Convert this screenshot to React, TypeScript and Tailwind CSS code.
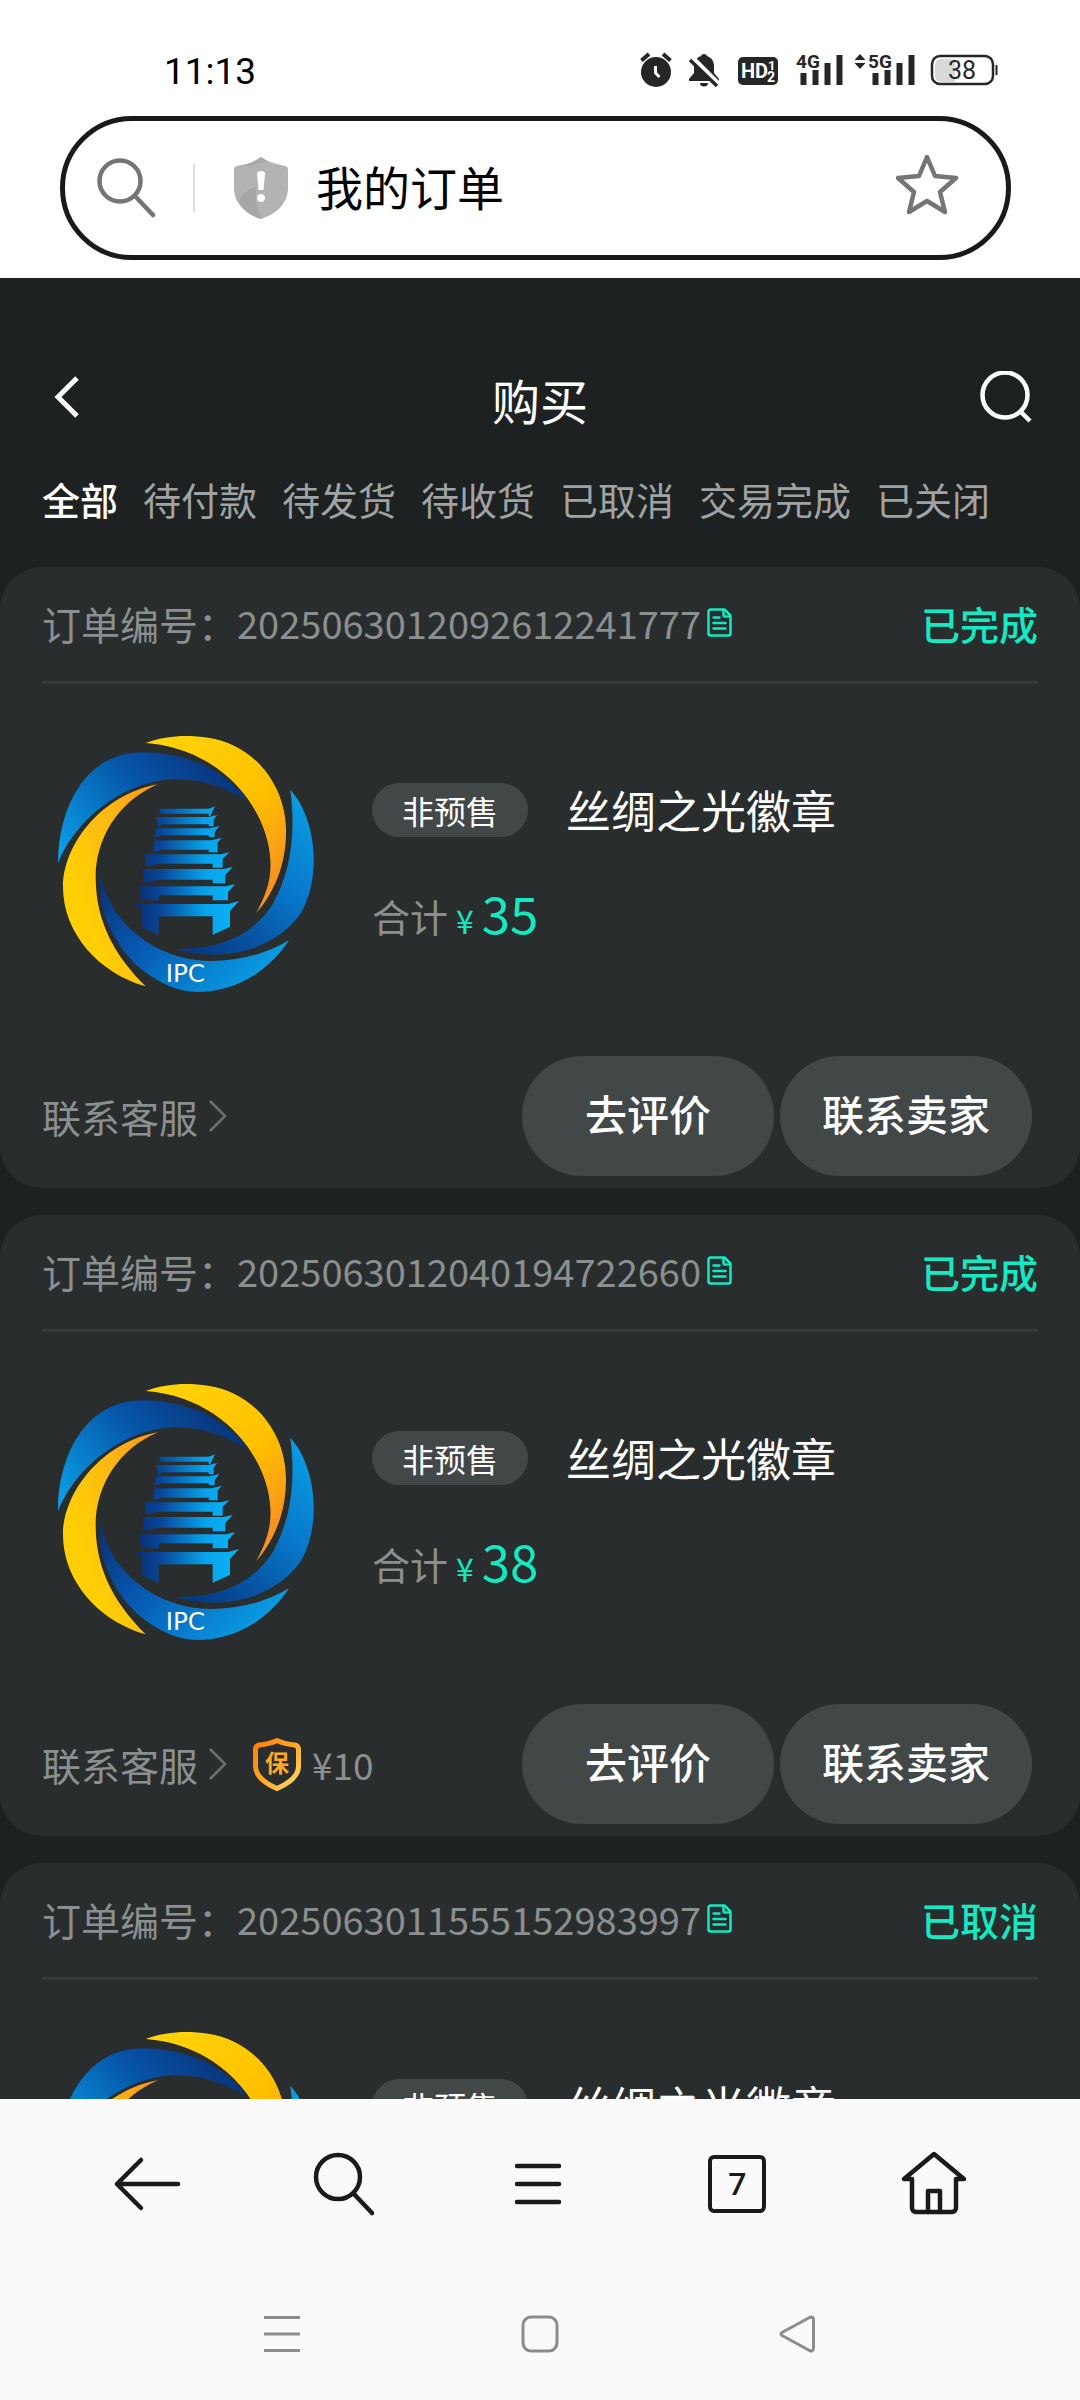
import { useState } from "react";

interface Order {
  id: string;
  status: string;
  title: string;
  price: number;
  deposit?: number;
}

const tabs = ["全部", "待付款", "待发货", "待收货", "已取消", "交易完成", "已关闭"];

const orders: Order[] = [
  { id: "2025063012092612241777", status: "已完成", title: "丝绸之光徽章", price: 35 },
  { id: "2025063012040194722660", status: "已完成", title: "丝绸之光徽章", price: 38, deposit: 10 },
  { id: "2025063011555152983997", status: "已取消", title: "丝绸之光徽章", price: 38 },
];

const StatusBar = () => (
  <div className="flex items-center justify-between pt-12 pl-[164px] pr-[82px] text-[#262626]">
    <span className="pt-1 font-['Roboto',sans-serif] text-[37px] leading-10 text-black">11:13</span>
    <svg width="358" height="36" viewBox="0 0 358 36" aria-hidden="true">
      {/* Alarm */}
      <circle cx="16" cy="20" r="15" fill="currentColor" />
      <path d="M1.500 8.500 9 2M30.500 8.500 23 2" stroke="currentColor" strokeWidth="4" fill="none" />
      <path d="M15.500 14v7l4 4" stroke="#fff" strokeWidth="3" fill="none" />
      {/* Muted bell */}
      <path d="M64 2a3 3 0 0 1 3 2c5 1.500 7 6 7 10v7l5 6v2H49v-2l5-6v-7c0-4 2-8.500 7-10a3 3 0 0 1 3-2z" fill="currentColor" />
      <path d="M60 31h8a4 3.500 0 0 1-8 0z" fill="currentColor" />
      <path d="M50 4 80 34" stroke="#fff" strokeWidth="6" />
      <path d="M50 8 77 34" stroke="currentColor" strokeWidth="3.500" />
      {/* HD */}
      <rect x="98" y="5" width="40" height="28" rx="5" fill="currentColor" />
      <text x="101" y="26" fill="#fff" fontSize="20" fontWeight="700" fontFamily="Roboto, sans-serif">HD</text>
      <text x="128" y="18" fill="#fff" fontSize="13" fontWeight="700" fontFamily="Roboto, sans-serif">1</text>
      <text x="127" y="30" fill="#fff" fontSize="14" fontWeight="700" fontFamily="Roboto, sans-serif">2</text>
      {/* 4G */}
      <text x="156" y="16" fill="currentColor" fontSize="19" fontWeight="700" fontFamily="Roboto, sans-serif">4G</text>
      <path d="M163.500 21v12M175.500 18v15M187.500 11v22M199.500 3v30" stroke="currentColor" strokeWidth="6" />
      {/* 5G */}
      <path d="m220 2 5.500 6h-11zM220 17l5.500-6h-11z" fill="currentColor" />
      <text x="228" y="16" fill="currentColor" fontSize="19" fontWeight="700" fontFamily="Roboto, sans-serif">5G</text>
      <path d="M235.500 21v12M247.500 18v15M259.500 11v22M271.500 3v30" stroke="currentColor" strokeWidth="6" />
      {/* Battery */}
      <path d="M301 7h14v23h-14a6 6 0 0 1-6-6V13a6 6 0 0 1 6-6z" fill="#d9d9d9" />
      <rect x="292" y="4" width="61" height="28" rx="8" fill="none" stroke="currentColor" strokeWidth="2.500" />
      <path d="M356.500 13v10" stroke="currentColor" strokeWidth="2" />
      <text x="322" y="27" textAnchor="middle" fill="currentColor" fontSize="25" fontFamily="Roboto, sans-serif">38</text>
    </svg>
  </div>
);

const AddressBar = () => (
  <div className="ml-[60px] mr-[69px] mt-6 flex h-36 items-center rounded-full border-[5px] border-[#1a1a1a] bg-white pl-8 pr-[46px]">
    <button type="button" aria-label="搜索">
      <svg width="60" height="60" viewBox="0 0 60 60" fill="none" stroke="#757575" strokeWidth="4.500" strokeLinecap="round" aria-hidden="true">
        <circle cx="23" cy="23" r="20.500" />
        <path d="m38 38 18 19" />
      </svg>
    </button>
    <span className="ml-9 h-12 w-0.5 bg-[#e0e0e0]" />
    <svg className="ml-[39px]" width="54" height="62" viewBox="0 0 54 62" aria-hidden="true">
      <path d="M27 0c7 5 15 8 24 9q3 .500 3 4v18c0 15-11 26-27 31C11 57 0 46 0 31V13q0-3.500 3-4c9-1 17-4 24-9z" fill="#b3b3b3" />
      <path d="M27 0c7 5 15 8 24 9L36 5q-8-1-19 4H3c9-1 17-4 24-9z" fill="#a9a9a9" />
      <path d="M5 44Q9 33 22 30v14l5 18C17 59 9 53 5 44z" fill="#a6a6a6" />
      <path d="M23 17q0-3 4-3t4 3l-1.500 16h-5z" fill="#fff" />
      <circle cx="27" cy="41" r="4" fill="#fff" />
    </svg>
    <input
      id="address"
      type="text"
      aria-label="地址栏"
      defaultValue="我的订单"
      className="ml-7 min-w-0 flex-1 bg-transparent pb-1 text-[47px] leading-[72px] text-black outline-none"
    />
    <button type="button" aria-label="收藏">
      <svg width="64" height="66" viewBox="0 0 64 66" fill="none" stroke="#757575" strokeWidth="4.500" strokeLinejoin="round" aria-hidden="true">
        <path d="m31 2 8 19 21 2-16 14 5 20-18-11-18 11 5-20L2 23l21-2z" />
      </svg>
    </button>
  </div>
);

const Emblem = () => (
  <svg width="256" height="256" viewBox="55 47 768 768" role="img" aria-label="IPC">
    <defs>
      <linearGradient id="gold" x1="0" y1="0" x2="0.6" y2="1">
        <stop offset="0" stopColor="#ffd60a" />
        <stop offset="0.6" stopColor="#ffc000" />
        <stop offset="1" stopColor="#f7931e" />
      </linearGradient>
      <linearGradient id="goldLeft" x1="1" y1="0" x2="0.2" y2="0.6">
        <stop offset="0" stopColor="#f7931e" />
        <stop offset="0.5" stopColor="#fdb813" />
        <stop offset="1" stopColor="#ffcf05" />
      </linearGradient>
      <linearGradient id="blueTop" x1="0" y1="0.8" x2="1" y2="0.3">
        <stop offset="0" stopColor="#0a9be3" />
        <stop offset="0.55" stopColor="#0654a8" />
        <stop offset="1" stopColor="#0a3278" />
      </linearGradient>
      <linearGradient id="blueRight" x1="0.8" y1="0" x2="0.2" y2="1">
        <stop offset="0" stopColor="#0a9be3" />
        <stop offset="0.45" stopColor="#0877c9" />
        <stop offset="1" stopColor="#063a85" />
      </linearGradient>
      <linearGradient id="blueBottom" x1="0" y1="0" x2="1" y2="0.6">
        <stop offset="0" stopColor="#0a2f70" />
        <stop offset="0.4" stopColor="#0656ae" />
        <stop offset="1" stopColor="#0a9be3" />
      </linearGradient>
      <linearGradient id="tower" gradientUnits="userSpaceOnUse" x1="300" y1="0" x2="560" y2="0">
        <stop offset="0" stopColor="#0a3278" />
        <stop offset="0.25" stopColor="#08479a" />
        <stop offset="0.75" stopColor="#07a3ea" />
        <stop offset="1" stopColor="#0aaef2" />
      </linearGradient>
    </defs>
    <path d="M55 428C55 260 140 95 310 96C440 97 560 150 622 240C540 195 480 176 405 177C260 180 110 290 55 428z" fill="url(#blueTop)" />
    <path d="M318 68C380 46 440 43 505 52C640 72 738 190 739 330C740 430 705 515 650 578C680 520 695 480 692 420C686 270 550 85 318 68z" fill="url(#gold)" />
    <path d="M752 208C800 260 825 350 822 430C820 490 805 550 775 590C700 685 560 730 400 686C540 690 640 645 700 550C750 460 770 350 752 208z" fill="url(#blueRight)" />
    <path d="M355 192C190 220 70 370 70 500C70 640 180 760 318 798C230 710 168 610 168 470C168 350 240 240 355 192z" fill="url(#goldLeft)" />
    <path d="M182 462C210 610 350 720 510 722C600 722 680 700 748 660C690 750 590 815 470 815C380 812 290 750 240 675C195 605 175 540 182 462z" fill="url(#blueBottom)" />
    <g fill="url(#tower)">
      <path d="M357 265H507L526 258L512 287H507V280H364z" />
      <path d="M350 290H506L532 284L522 298V318H507V312H368L356 320z" />
      <path d="M350 324H510L539 317L525 335V350H507V345H366L344 352z" />
      <path d="M345 360H516L547 352L534 366V396H507V388H372L340 394z" />
      <path d="M314 402H545L569 396L549 415V442H519V430H357L318 438z" />
      <path d="M308 446H552L579 440L557 464V489H519V478H357L314 488z" />
      <path d="M300 498H560L586 491L565 516V540H519V525H357V541L304 536z" />
      <path d="M285 551H565L598 542L571 572V620L519 643V588H357V643L304 620V565z" />
    </g>
    <text x="437" y="786" textAnchor="middle" fill="#fff" fontSize="74" fontFamily="DejaVu Sans, sans-serif">IPC</text>
  </svg>
);

const DocIcon = () => (
  <svg width="26" height="30" viewBox="0 0 26 30" fill="none" stroke="currentColor" strokeWidth="2.500" strokeLinejoin="round" strokeLinecap="round" aria-hidden="true">
    <path d="M3.500 1.500h14l6 6v18a2 2 0 0 1-2 2h-18a2 2 0 0 1-2-2v-22a2 2 0 0 1 2-2z" />
    <path d="M16.500 2v5.500a1 1 0 0 0 1 1H23M6.500 9.500h6M6.500 15h12M6.500 20.500h12" />
  </svg>
);

const DepositBadge = () => (
  <svg width="50" height="54" viewBox="0 0 50 54" role="img" aria-label="保">
    <defs>
      <linearGradient id="badge" x1="0" y1="0" x2="1" y2="1">
        <stop offset="0" stopColor="#ff7f0a" />
        <stop offset="0.5" stopColor="#ffa826" />
        <stop offset="1" stopColor="#ffdd66" />
      </linearGradient>
    </defs>
    <path
      d="M25 3.500c6 3 12 4 18 4.500q3.500 1 3.500 4.500V29c0 10-9 17-21.500 22.500C12.500 46 3.500 39 3.500 29V12.500Q3.500 9 7 8c6-.500 12-1.500 18-4.500z"
      fill="none"
      stroke="url(#badge)"
      strokeWidth="5"
      strokeLinejoin="round"
    />
    <text x="25" y="35" textAnchor="middle" fill="#ffa826" fontSize="24" fontWeight="700">保</text>
  </svg>
);

const OrderCard = ({ order }: { order: Order }) => (
  <article className="rounded-[42px] bg-[#292d2e] pb-3">
    <header className="mx-[42px] flex h-[117px] items-center border-b-[3px] border-[#343839] pb-0.5">
      <span className="text-[39px] leading-[56px] text-[#8b8f8f]">订单编号：</span>
      <span className="text-[38px] leading-[56px] text-[#8b8f8f]">{order.id}</span>
      <button type="button" aria-label="复制订单编号" className="ml-1.5 text-[#13e9c2]">
        <DocIcon />
      </button>
      <span className="ml-auto text-[39px] leading-[56px] font-medium text-[#13e9c2]">{order.status}</span>
    </header>

    <div className="mt-[52px] flex pl-[58px]">
      <Emblem />
      <div className="ml-[58px] pt-11">
        <div className="flex items-center">
          <span className="flex h-[54px] w-[156px] items-center justify-center rounded-full bg-[#414847] text-[32px] text-white">
            非预售
          </span>
          <h2 className="ml-[38px] text-[45px] leading-[60px] text-white">{order.title}</h2>
        </div>
        <p className="mt-9 flex items-center leading-[72px]">
          <span className="text-[38px] text-[#8b8f8f]">合计</span>
          <span className="ml-2 flex items-baseline gap-2 text-[#13e9c2]">
            <span className="text-[32px]">¥</span>
            <span className="text-[51px]">{order.price}</span>
          </span>
        </p>
      </div>
    </div>

    <footer className="mt-16 flex items-center pl-[42px] pr-12">
      <a href="#service" className="flex items-center text-[39px] leading-[56px] text-[#8b8f8f]">
        联系客服
        <svg className="ml-2.5" width="20" height="34" viewBox="0 0 20 34" fill="none" stroke="#6c7070" strokeWidth="2.500" aria-hidden="true">
          <path d="m2 2 15 15L2 32" />
        </svg>
      </a>
      {order.deposit && (
        <span className="ml-6 flex items-center gap-2.5 text-[37px] leading-[56px] text-[#8b8f8f]">
          <DepositBadge />¥{order.deposit}
        </span>
      )}
      <div className="ml-auto flex gap-1.5">
        <button type="button" className="h-[120px] w-[252px] rounded-full bg-[#414847] pb-2 text-[42px] font-medium text-white">
          去评价
        </button>
        <button type="button" className="h-[120px] w-[252px] rounded-full bg-[#414847] pb-2 text-[42px] font-medium text-white">
          联系卖家
        </button>
      </div>
    </footer>
  </article>
);

const BrowserBar = () => (
  <nav aria-label="浏览器" className="flex items-center justify-around pt-[50px] pr-12 pl-[50px] text-[#1a1a1a]">
    <button type="button" aria-label="后退">
      <svg width="70" height="70" viewBox="0 0 70 70" fill="none" stroke="currentColor" strokeWidth="4.500" strokeLinecap="round" strokeLinejoin="round" aria-hidden="true">
        <path d="M65 35H4M28 11 4 35l24 24" />
      </svg>
    </button>
    <button type="button" aria-label="搜索">
      <svg width="70" height="70" viewBox="0 0 70 70" fill="none" stroke="currentColor" strokeWidth="4.500" strokeLinecap="round" aria-hidden="true">
        <circle cx="28" cy="28" r="22" />
        <path d="m44 45 18 19" />
      </svg>
    </button>
    <button type="button" aria-label="菜单">
      <svg width="70" height="70" viewBox="0 0 70 70" fill="none" stroke="currentColor" strokeWidth="4.500" strokeLinecap="round" aria-hidden="true">
        <path d="M11 17h42M11 35h42M11 53h42" />
      </svg>
    </button>
    <button type="button" aria-label="标签页" className="flex h-[70px] w-[70px] items-center justify-center">
      <span className="flex h-[58px] w-[58px] items-center justify-center rounded-md border-4 border-current font-['Roboto',sans-serif] text-[32px] font-medium">
        7
      </span>
    </button>
    <button type="button" aria-label="主页">
      <svg width="70" height="70" viewBox="0 0 70 70" fill="none" stroke="currentColor" strokeWidth="4.500" strokeLinecap="round" strokeLinejoin="round" aria-hidden="true">
        <path d="M35 5 5 30h8v29a4 4 0 0 0 4 4h36a4 4 0 0 0 4-4V30h8z" />
        <path d="M29 63V42h12v21" />
      </svg>
    </button>
  </nav>
);

const SystemNav = () => (
  <nav aria-label="系统导航" className="mt-[95px] mb-[46px] flex justify-around px-[153px] text-[#8c8c8c]">
    <button type="button" aria-label="最近任务">
      <svg width="40" height="40" viewBox="0 0 40 40" fill="none" stroke="currentColor" strokeWidth="3" aria-hidden="true">
        <path d="M2 3.500h36M2 20h36M2 36.500h36" />
      </svg>
    </button>
    <button type="button" aria-label="桌面">
      <svg width="40" height="40" viewBox="0 0 40 40" fill="none" stroke="currentColor" strokeWidth="3" aria-hidden="true">
        <rect x="3" y="3" width="34" height="34" rx="8" />
      </svg>
    </button>
    <button type="button" aria-label="返回">
      <svg width="40" height="40" viewBox="0 0 40 40" fill="none" stroke="currentColor" strokeWidth="3" strokeLinejoin="round" aria-hidden="true">
        <path d="M4 18.500 31.500 3.500q4-1.500 4 2.500v28q0 4-4 2.500L4 21.500q-2-1.500 0-3z" />
      </svg>
    </button>
  </nav>
);

const App = () => {
  const [active, setActive] = useState("全部");

  return (
    <div className="flex h-screen flex-col overflow-hidden bg-white font-['Noto_Sans_CJK_SC',sans-serif]">
      <header className="shrink-0 pb-[18px]">
        <StatusBar />
        <AddressBar />
      </header>

      <main className="min-h-0 flex-1 overflow-y-auto bg-[#1d2121] [scrollbar-width:none]">
        <div className="flex items-center justify-between px-12 pt-[87px]">
          <button type="button" aria-label="返回">
            <svg width="56" height="56" viewBox="0 0 56 56" fill="none" stroke="#fff" strokeWidth="5" aria-hidden="true">
              <path d="M29 7 10 26l19 19" />
            </svg>
          </button>
          <h1 className="text-[48px] leading-[68px] text-white">购买</h1>
          <button type="button" aria-label="搜索订单">
            <svg width="56" height="56" viewBox="0 0 56 56" fill="none" stroke="#fff" strokeWidth="4.500" aria-hidden="true">
              <circle cx="29" cy="24" r="22.500" />
              <path d="m44 40 10 10" />
            </svg>
          </button>
        </div>

        <div role="tablist" className="mt-[38px] flex gap-[25px] pl-[42px]">
          {tabs.map((tab) => (
            <button
              key={tab}
              type="button"
              role="tab"
              aria-selected={tab === active}
              onClick={() => setActive(tab)}
              className={`shrink-0 text-[38px] leading-[56px] ${tab === active ? "font-medium text-white" : "text-[#a0a3a3]"}`}
            >
              {tab}
            </button>
          ))}
        </div>

        <div className="mt-10 flex flex-col gap-[27px]">
          {orders.map((order) => (
            <OrderCard key={order.id} order={order} />
          ))}
        </div>
      </main>

      <div className="shrink-0 bg-[#fafafa]">
        <BrowserBar />
        <SystemNav />
      </div>
    </div>
  );
};

export default App;
